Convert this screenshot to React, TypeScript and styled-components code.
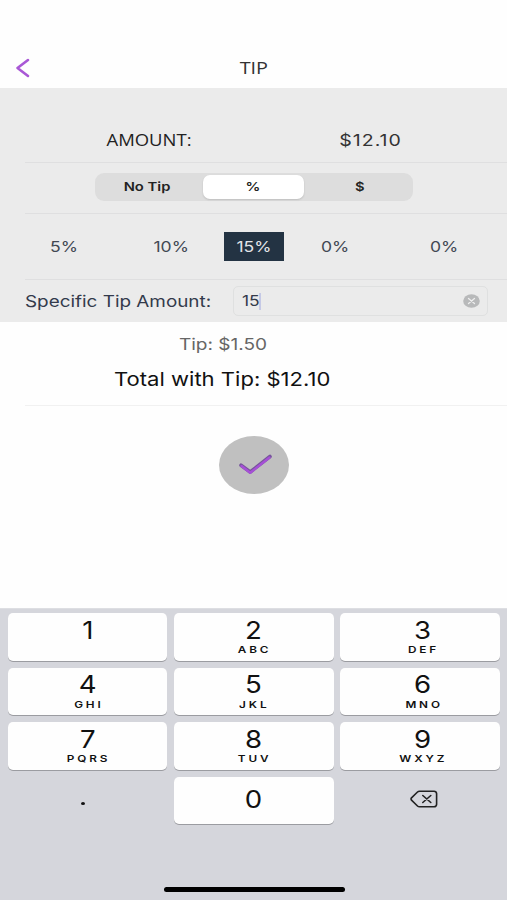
import React from "react";
import styled, { createGlobalStyle } from "styled-components";

const GlobalStyle = createGlobalStyle`
  * { box-sizing: border-box; }
  body { margin: 0; background: #fefefe; font-family: Inter, "Liberation Sans", sans-serif; }
  button { font: inherit; color: inherit; border: 0; padding: 0; background: none; }
`;

const Screen = styled.main`
  width: 507px;
  height: 900px;
  display: flex;
  flex-direction: column;
  overflow: hidden;
  background: #fefefe;
`;

type LabelProps = {
  $size: number;
  $color?: string;
  $weight?: number;
  $stretch?: number;
  $tracking?: number;
  $font?: string;
  $origin?: string;
};

const Label = styled.span<LabelProps>`
  display: inline-block;
  white-space: nowrap;
  line-height: 1;
  font-family: ${(p) => (p.$font ? `"${p.$font}", ` : "")}Inter, sans-serif;
  font-size: ${(p) => p.$size}px;
  font-weight: ${(p) => p.$weight ?? 400};
  color: ${(p) => p.$color ?? "#111"};
  letter-spacing: ${(p) => p.$tracking ?? 0}px;
  margin-right: ${(p) => -(p.$tracking ?? 0)}px;
  transform: scaleX(${(p) => p.$stretch ?? 1.2});
  transform-origin: ${(p) => p.$origin ?? "center"};
`;

const Header = styled.header`
  height: 88px;
  padding: 48px 13px 0 14px;
  display: grid;
  grid-template-columns: 18px 1fr 18px;
  align-items: center;
  justify-items: center;
`;

const BackButton = styled.button`
  width: 18px;
  height: 22px;
  svg { display: block; }
`;

const Panel = styled.section`
  height: 234px;
  background: #ebebeb;
  display: flex;
  flex-direction: column;
`;

const Divider = styled.hr<{ $light?: boolean }>`
  flex: none;
  width: 482px;
  height: 1px;
  margin: 0 0 0 25px;
  border: 0;
  background: ${(p) => (p.$light ? "#f1f1f1" : "#dfdfe0")};
`;

const AmountRow = styled.div`
  height: 74px;
  padding: 30px 21px 0 42px;
  display: grid;
  grid-template-columns: 213px 1fr;
  align-items: center;
  justify-items: center;
`;

const SegmentRow = styled.div`
  height: 50px;
  padding-bottom: 2px;
  display: flex;
  align-items: center;
  justify-content: center;
`;

const Segments = styled.div`
  width: 318px;
  height: 28px;
  padding: 2px 4px;
  display: grid;
  grid-template-columns: 104px 101px 105px;
  border-radius: 9px;
  background: #dddddd;
`;

const Segment = styled.button<{ $active?: boolean }>`
  height: 24px;
  display: flex;
  align-items: center;
  justify-content: center;
  border-radius: 7px;
  background: ${(p) => (p.$active ? "#fff" : "transparent")};
  box-shadow: ${(p) => (p.$active ? "0 1px 2px rgba(0,0,0,.14)" : "none")};
  &:first-child { padding-right: 7px; }
  &:last-child { padding-left: 7px; }
`;

const Percentages = styled.div`
  height: 65px;
  display: grid;
  grid-template-columns: 127px 88px 78px 84px 135px;
  align-items: center;
  justify-items: center;
`;

const Percentage = styled.button<{ $active?: boolean }>`
  width: 60px;
  height: 29px;
  display: flex;
  align-items: center;
  justify-content: center;
  background: ${(p) => (p.$active ? "#233343" : "transparent")};
`;

const SpecificRow = styled.div`
  height: 42px;
  padding: 0 19px 0 25px;
  display: flex;
  align-items: center;
  justify-content: space-between;
`;

const Field = styled.div`
  width: 255px;
  height: 30px;
  padding: 0 7px 0 8px;
  display: flex;
  align-items: center;
  border: 1px solid #dfe0e0;
  border-radius: 5px;
`;

const Caret = styled.span`
  width: 2px;
  height: 17px;
  margin-left: 2.5px;
  background: #c5c9e6;
`;

const ClearButton = styled.button`
  margin-left: auto;
  svg { display: block; }
`;

const Totals = styled.section`
  height: 83px;
  padding-top: 13px;
  display: flex;
  flex-direction: column;
  align-items: center;
`;

const TipLine = styled.div`
  height: 18px;
  padding-right: 61px;
  display: flex;
  align-items: center;
`;

const TotalLine = styled.div`
  height: 26px;
  margin-top: 13px;
  padding-right: 62px;
  display: flex;
  align-items: center;
`;

const Confirm = styled.button`
  width: 70px;
  height: 58px;
  margin: 30px auto 0;
  padding-left: 1px;
  display: flex;
  align-items: center;
  justify-content: center;
  border-radius: 50%;
  background: #c0c0c0;
`;

const Keyboard = styled.section`
  height: 292px;
  margin-top: auto;
  padding: 4.4px 7px 0 8px;
  display: flex;
  flex-direction: column;
  align-items: center;
  background: #d5d6dc;
  border-top: 1px solid #dddee2;
`;

const Keys = styled.div`
  width: 492px;
  display: grid;
  grid-template-columns: 159px 160px 160px;
  grid-template-rows: repeat(4, 47.6px);
  gap: 6.8px 6.5px;
`;

const Key = styled.button<{ $plain?: boolean; $solo?: boolean }>`
  display: flex;
  flex-direction: column;
  align-items: center;
  justify-content: ${(p) => (p.$plain || p.$solo ? "center" : "flex-start")};
  padding-top: ${(p) => (p.$plain || p.$solo ? 0 : 5.6)}px;
  gap: 2.4px;
  border-radius: 5px;
  background: ${(p) => (p.$plain ? "transparent" : "#fefefe")};
  box-shadow: ${(p) => (p.$plain ? "none" : "0 1px 0 #9b9ca1")};
  padding-bottom: ${(p) => (p.$plain ? 2 : 0)}px;
  &:nth-child(3n) { padding-left: ${(p) => (p.$plain ? 7 : 5)}px; }
`;

const Period = styled.span`
  width: 4px;
  height: 3px;
  margin: 8px 10px 0 0;
  border-radius: 50%;
  background: #111;
`;

const HomeBar = styled.div`
  width: 181px;
  height: 5px;
  margin: auto 0 8px;
  border-radius: 3px;
  background: #000;
`;

const segments = ["No Tip", "%", "$"];
const percentages = ["5%", "10%", "15%", "0%", "0%"];
const keys: [string, string][] = [
  ["1", ""], ["2", "ABC"], ["3", "DEF"],
  ["4", "GHI"], ["5", "JKL"], ["6", "MNO"],
  ["7", "PQRS"], ["8", "TUV"], ["9", "WXYZ"],
];

export default function App() {
  return (
    <>
      <GlobalStyle />
      <Screen>
        <Header>
          <BackButton aria-label="Back">
            <svg width="18" height="22" viewBox="0 0 18 22" fill="none" stroke="#a958d6" strokeWidth="2.6" strokeLinecap="round" strokeLinejoin="round">
              <path d="M14 3 3.5 11 14 19" />
            </svg>
          </BackButton>
          <Label $size={16.5} $font="Open Sans" $stretch={1.2} $color="#333">TIP</Label>
        </Header>

        <Panel>
          <AmountRow>
            <Label $size={16.5} $font="Open Sans" $stretch={1.12} $color="#222">AMOUNT:</Label>
            <Label $size={16} $tracking={0.8} $stretch={1.22} $color="#333">$12.10</Label>
          </AmountRow>
          <Divider />
          <SegmentRow>
            <Segments>
              {segments.map((s) => (
                <Segment key={s} $active={s === "%"}>
                  <Label $size={12} $weight={600} $stretch={1.23} $color="#222">{s}</Label>
                </Segment>
              ))}
            </Segments>
          </SegmentRow>
          <Divider />
          <Percentages>
            {percentages.map((p, i) => (
              <Percentage key={i} $active={i === 2}>
                <Label $size={15} $stretch={1.17} $color={i === 2 ? "#e2e5e8" : "#414853"}>{p}</Label>
              </Percentage>
            ))}
          </Percentages>
          <Divider />
          <SpecificRow>
            <Label $size={16} $stretch={1.18} $origin="left" $color="#333a4b">Specific Tip Amount:</Label>
            <Field>
              <Label $size={14.5} $origin="left" $color="#333a4b">15</Label>
              <Caret />
              <ClearButton aria-label="Clear">
                <svg width="17" height="14" viewBox="0 0 17 14">
                  <ellipse cx="8.5" cy="7" rx="8.3" ry="6.8" fill="#b8b9ba" />
                  <path d="m5.5 4.5 6 5m0-5-6 5" stroke="#eee" strokeWidth="1.3" strokeLinecap="round" />
                </svg>
              </ClearButton>
            </Field>
          </SpecificRow>
        </Panel>

        <Totals>
          <TipLine><Label $size={16} $stretch={1.19} $color="#666">Tip: $1.50</Label></TipLine>
          <TotalLine><Label $size={19} $stretch={1.16}>Total with Tip: $12.10</Label></TotalLine>
        </Totals>
        <Divider $light />

        <Confirm aria-label="Confirm">
          <svg width="36" height="24" viewBox="0 0 36 24" fill="none" strokeLinecap="round" strokeLinejoin="round">
            <path d="M5 12.2 14.2 19 34 3.5" stroke="#76549b" strokeWidth="3.6" />
            <path d="M5.5 13 14.2 19.8 33.5 4.5" stroke="#a650d6" strokeWidth="2.4" />
          </svg>
        </Confirm>

        <Keyboard>
          <Keys>
            {keys.map(([digit, letters]) => (
              <Key key={digit}>
                <Label $size={24} $stretch={1.15}>{digit}</Label>
                {letters && <Label $size={9.5} $weight={600} $tracking={2.3} $stretch={1.24}>{letters}</Label>}
              </Key>
            ))}
            <Key $plain aria-label="Decimal point"><Period /></Key>
            <Key $solo><Label $size={24} $stretch={1.15}>0</Label></Key>
            <Key $plain aria-label="Delete">
              <svg width="28" height="18" viewBox="0 0 28 18" fill="none" stroke="#222" strokeWidth="1.6" strokeLinecap="round" strokeLinejoin="round">
                <path d="M9.5 1.2H24a2.6 2.6 0 0 1 2.6 2.4v10.8a2.6 2.6 0 0 1-2.6 2.4H9.5Q8.3 16.8 7.5 16L1.5 10.2Q.6 9 1.5 7.8L7.5 2Q8.3 1.2 9.5 1.2Z" />
                <path d="m12.8 5.5 8 7m0-7-8 7" />
              </svg>
            </Key>
          </Keys>
          <HomeBar />
        </Keyboard>
      </Screen>
    </>
  );
}
